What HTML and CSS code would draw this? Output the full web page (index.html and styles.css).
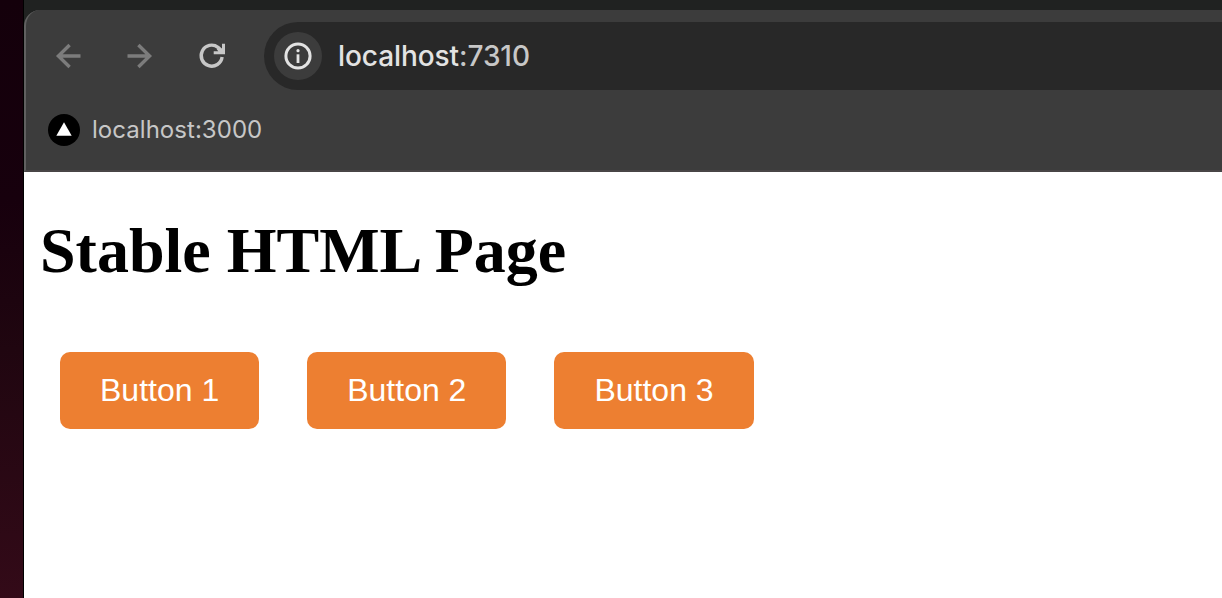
FILE: index.html
```html
<!DOCTYPE html>
<html lang="en">
<head>
<meta charset="utf-8">
<title>Stable HTML Page</title>
<link rel="stylesheet" href="styles.css">
</head>
<body>
<div class="desktop">
  <div class="window">
    <header class="chrome">
      <div class="toolbar">
        <svg class="nav-icon dim" viewBox="0 0 32 32"><path d="M28.5 16H6M17.6 5 6.4 16 17.6 27"/></svg>
        <svg class="nav-icon dim" viewBox="0 0 32 32"><path d="M3.5 16H26M14.4 5 25.6 16 14.4 27"/></svg>
        <svg class="nav-icon reload" viewBox="0 0 32 32"><path d="M26.1 17A10.5 10.5 0 1 1 22 7.3L25 10.4"/><path class="head" d="M26 3.8h3v10.4H17.7v-3h4.6l-1.6-2 2.6-2.4 2.7 2z"/></svg>
        <div class="address">
          <span class="site-info"><svg viewBox="0 0 48 48"><circle class="ring" cx="24" cy="24" r="12.1"/><circle class="dot" cx="24" cy="18.7" r="1.6"/><path class="stem" d="M24 22.3V31"/></svg></span>
          <span class="url">localhost<span class="port">:7310</span></span>
        </div>
      </div>
      <div class="bookmarks">
        <svg class="favicon" viewBox="0 0 32 32"><circle cx="16" cy="16" r="16"/><path d="M16 8.2 23.7 21.7H8.3z"/></svg>
        <span class="bookmark">localhost:3000</span>
      </div>
    </header>
    <main class="page">
      <h1>Stable HTML Page</h1>
      <div class="buttons">
        <button>Button 1</button>
        <button>Button 2</button>
        <button>Button 3</button>
      </div>
    </main>
  </div>
</div>
</body>
</html>
```
FILE: styles.css
```css
* { box-sizing: border-box; }
body { margin: 0; overflow: hidden; }
.desktop {
  height: 598px;
  padding-left: 23px;
  background: linear-gradient(#14000b 0, #17000d 200px, #200610 350px, #330a18 598px);
}
.window {
  height: 598px;
  border-left: 1px solid #000;
  background: #202221;
  padding-top: 10px;
}
.chrome {
  height: 162px;
  background: #3c3c3c;
  border-left: 2px solid #606060;
  border-bottom: 2px solid #484546;
  border-top-left-radius: 16px;
}
.toolbar {
  display: flex;
  align-items: center;
  height: 92px;
  padding-left: 26px;
}
.nav-icon {
  flex: none;
  width: 32px;
  height: 32px;
  margin-right: 40px;
  fill: none;
  stroke: #c7c7c7;
  stroke-width: 3.4;
}
.dim { stroke: #7c7c7c; }
.reload { margin-right: 36px; }
.head { fill: #c7c7c7; stroke: none; }
.address {
  flex: 1;
  display: flex;
  align-items: center;
  height: 68px;
  padding-left: 10px;
  border-radius: 34px 0 0 34px;
  background: #282828;
}
.site-info {
  width: 48px;
  height: 48px;
  border-radius: 50%;
  background: #3c3c3c;
}
.site-info svg { display: block; }
.ring { fill: none; stroke: #e3e3e3; stroke-width: 3; }
.dot { fill: #e3e3e3; }
.stem { stroke: #e3e3e3; stroke-width: 2.8; }
.url {
  margin-left: 16px;
  font: 450 28px/36px Inter, sans-serif;
  letter-spacing: -0.08px;
  color: #e3e3e3;
}
.port { color: #c7c7c7; }
.bookmarks {
  display: flex;
  align-items: center;
  height: 56px;
  padding-left: 22px;
}
.favicon { width: 32px; height: 32px; }
.favicon path { fill: #fff; }
.bookmark {
  margin-left: 12px;
  font: 24px/32px Inter, sans-serif;
  letter-spacing: 0.04px;
  color: #c7c7c7;
}
.page {
  height: 426px;
  padding: 42px 16px 0;
  background: #fff;
}
h1 {
  margin: 0;
  font: bold 64px/74px "Liberation Serif", serif;
  color: #000;
}
.buttons {
  display: flex;
  gap: 48px;
  padding: 64px 0 0 20px;
}
button {
  height: 77px;
  padding: 0 40px 2px;
  border: 0;
  border-radius: 10px;
  background: #ed7f31;
  color: #fff;
  font: 32px/36px "Liberation Sans", sans-serif;
}
```
